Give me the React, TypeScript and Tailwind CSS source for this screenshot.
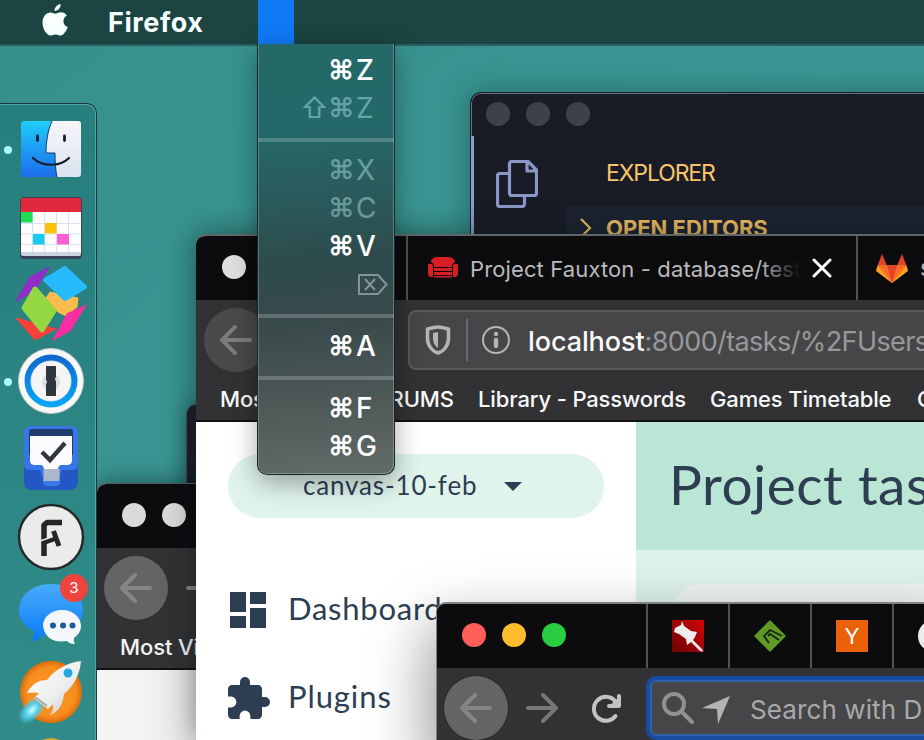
import React from 'react';

function BackArrow({ className }: { className: string }) {
  return (
    <svg width="32" height="32" viewBox="0 0 32 32" fill="none" stroke="currentColor" strokeWidth="4" strokeLinecap="round" strokeLinejoin="round" className={className}>
      <path d="M15 3 2 16l13 13M2 16h28" />
    </svg>
  );
}

function AppleLogo() {
  return (
    <svg width="26" height="32" viewBox="0 0 26 32" fill="#f8ffff" className="shrink-0">
      <path d="M18.6 0c.4 3.300-2.600 7-6 7C12.200 3.900 15.300.500 18.600 0Z" />
      <path d="M13.300 9.700c1.300 0 3.100-1.500 5.700-1.500 2.200 0 4.500 1.200 5.800 3.200-5 2.800-4.200 9.900 1 11.700-1.200 3.500-4.300 8.500-7.300 8.500-1.800 0-2.700-1.100-5-1.100s-3.300 1.100-5 1.100C4.700 31.600.500 25 .500 18.600c0-6.400 3.900-10.200 8-10.200 2.200 0 3.700 1.300 4.800 1.300Z" />
    </svg>
  );
}

function MenuBar() {
  return (
    <header className="absolute inset-x-0 top-0 flex h-[46px] items-start border-b-2 border-[#2a5f5d] bg-[#1b4442] pl-[42px] text-[#f8ffff]">
      <div className="flex h-[44px] items-start pt-1">
        <AppleLogo />
      </div>
      <div className="ml-10 h-[44px] w-[150px] pt-px text-[27px] font-bold leading-[44px] tracking-[0.6px]">Firefox</div>
      <div className="h-[44px] w-9 bg-[#1079f5]" />
    </header>
  );
}

function Finder() {
  return (
    <svg width="62" height="58" viewBox="0 0 62 58">
      <defs>
        <linearGradient id="fb" x1="0" y1="0" x2="0" y2="1"><stop stopColor="#1fcdfb" /><stop offset="1" stopColor="#1c6cee" /></linearGradient>
        <linearGradient id="fw" x1="0" y1="0" x2="0" y2="1"><stop stopColor="#f6f6fa" /><stop offset="1" stopColor="#dbe3ef" /></linearGradient>
      </defs>
      <rect x="1" y="1" width="60" height="56" rx="3" fill="url(#fb)" />
      <path d="M32 1h26a3 3 0 0 1 3 3v50a3 3 0 0 1-3 3H37c-1.500-7-2-15-2-24h-9C26 21 28 10 32 1Z" fill="url(#fw)" />
      <path d="M32 1c-4 9-6 20-6 32h9c0 9 .5 17 2 24" fill="none" stroke="#173a63" strokeWidth="1" />
      <path d="M17.500 16v4.500M44.500 16v4.500" stroke="#16202c" strokeWidth="2.800" strokeLinecap="round" />
      <path d="M13 38c9 9 27 9 36 0" fill="none" stroke="#16202c" strokeWidth="2.200" strokeLinecap="round" />
    </svg>
  );
}

function CalendarIcon() {
  return (
    <svg width="62" height="62" viewBox="0 0 62 62">
      <rect x="0" y="0" width="62" height="62" rx="4" fill="#3b4257" />
      <rect x="1" y="3" width="60" height="56" rx="2" fill="#ccd4e4" />
      <path d="M1 14h60v41H1z" fill="#fdfdff" />
      <path d="M1 3q0-2 2-2h56q2 0 2 2v12H1z" fill="#e1283c" />
      <path d="M12.500 15v40M24.500 15v40M36.500 15v40M48.500 15v40M1 26.500h60M1 37h60M1 47.500h60" stroke="#d7e2ee" strokeWidth="1" />
      <path d="M1 15h11.500v10.500H1z" fill="#1ddb53" />
      <path d="M25 26h11.500v10.500H25z" fill="#fdc30a" />
      <path d="M13 37h11.500v10.500H13z" fill="#17cbee" />
      <path d="M37 37h12v10.500H37z" fill="#f95fd1" />
    </svg>
  );
}

function CubesIcon() {
  return (
    <svg width="74" height="76" viewBox="0 0 74 76" strokeLinejoin="round" strokeWidth="1">
      <path d="M35 2 16 12 2 36l19-10z" fill="#902ec7" stroke="#902ec7" />
      <path d="M36 27 64 33 63 42 52 51 44 47 32 33z" fill="#fbbc4e" stroke="#fbbc4e" />
      <path d="M51 3 71 22 51 34 31 15z" fill="#27bafc" stroke="#27bafc" strokeWidth="4" />
      <path d="M2 53 42 64 21 75z" fill="#f9403a" stroke="#f9403a" />
      <path d="M21 24 40 46 28 65 10 43z" fill="#93d843" stroke="#93d843" strokeWidth="5" />
      <path d="M72 40 56 66 39 75 53 49z" fill="#f82ea2" stroke="#f82ea2" />
    </svg>
  );
}

function OnePassword() {
  return (
    <svg width="66" height="66" viewBox="0 0 66 66">
      <defs><linearGradient id="op" x1="0" y1="0" x2="0" y2="1"><stop stopColor="#0f66cd" /><stop offset="1" stopColor="#06a9fa" /></linearGradient></defs>
      <circle cx="33" cy="33" r="32.500" fill="#f8f8f8" stroke="#bfc8c8" />
      <circle cx="33" cy="33" r="26.500" fill="url(#op)" />
      <circle cx="33" cy="33" r="20" fill="#f5f5f6" stroke="#e0edf6" />
      <circle cx="33" cy="34" r="9" fill="#dcdde0" />
      <path d="M28 18h10v11q-2 2 0 4v15H28V36q2-2 0-4z" fill="#30363b" />
    </svg>
  );
}

function ThingsIcon() {
  return (
    <svg width="54" height="66" viewBox="0 0 54 66">
      <rect x="0" y="2" width="54" height="63" rx="8" fill="#2358c4" />
      <path d="M0 8q0-7 7-7h40q7 0 7 7v31q0 6-6 6H38l-2 6H18l-2-6H6q-6 0-6-6z" fill="#3875e6" />
      <path d="M5 7q0-3 3-3h38q3 0 3 3v33H5z" fill="#1d3e6a" />
      <path d="M6 11h42v25q0 4-4 4h-7q-2 0-3 4H20q-1-4-3-4h-7q-4 0-4-4z" fill="#fcfcfe" />
      <path d="M5 30v6q0 5 5 5h6q2 0 3 4h16q1-4 3-4h6q5 0 5-5v-6" fill="none" stroke="#3875e6" strokeWidth="2" />
      <path d="M19 47h17v10q0 4-4 4h-9q-4 0-4-4z" fill="#3b77e7" />
      <path d="M19.500 44h16v12h-16z" fill="#acb7ca" />
      <path d="m18 27 8 8 15-17" fill="none" stroke="#30363e" strokeWidth="4.300" />
    </svg>
  );
}

function ForkLiftIcon() {
  return (
    <svg width="68" height="68" viewBox="0 0 68 68">
      <circle cx="34" cy="34" r="32" fill="#ebebeb" stroke="#252a2b" strokeWidth="2.500" />
      <path d="M27 53V22l3-2.500h15" fill="none" stroke="#252629" strokeWidth="5.500" strokeLinejoin="round" />
      <path d="m22 38.500 14-4.500" stroke="#ebebeb" strokeWidth="2" />
      <path d="m25 40.500 14-5" stroke="#252629" strokeWidth="4.500" />
      <path d="m36.500 28 5.500 15" stroke="#252629" strokeWidth="5" />
    </svg>
  );
}

function MessagesIcon() {
  return (
    <div className="relative size-[64px]">
      <svg width="66" height="64" viewBox="0 0 66 64">
        <defs><linearGradient id="ms" x1="0" y1="0" x2="0" y2="1"><stop stopColor="#49acf8" /><stop offset="1" stopColor="#087afb" /></linearGradient></defs>
        <path d="M32 2c18 0 32 11 32 26S50 54 32 54q-4 0-8-1-5 6-12 6 4-4 3-10C5 44 0 37 0 28 0 13 14 2 32 2Z" fill="url(#ms)" />
        <path d="M43 28c11 0 19 7 19 16 0 5-3 9-7 12q-1 3 1 6-6 0-8-3-21 3-24-15c0-9 8-16 19-16Z" fill="#f4f7fa" />
        <path d="M34 43.500h.01M44 43.500h.01M53.500 43.500h.01" stroke="#195d9e" strokeWidth="6" strokeLinecap="round" />
      </svg>
      <span className="absolute -top-[8px] left-[41px] flex size-7 items-center justify-center rounded-full bg-[#ee4440] text-[15px] text-white">3</span>
    </div>
  );
}

function RocketIcon() {
  return (
    <svg width="64" height="66" viewBox="0 0 64 66">
      <defs>
        <radialGradient id="mo"><stop stopColor="#fb9c22" /><stop offset=".8" stopColor="#f78d1e" /><stop offset="1" stopColor="#dc6b0c" /></radialGradient>
        <linearGradient id="rk" x1="0" y1="0" x2="1" y2="1"><stop stopColor="#ffffff" /><stop offset=".6" stopColor="#ebeced" /><stop offset="1" stopColor="#b8babd" /></linearGradient>
        <radialGradient id="fl"><stop stopColor="#c9ffff" /><stop offset=".5" stopColor="#53cbec" /><stop offset="1" stopColor="#53cbec" stopOpacity="0" /></radialGradient>
      </defs>
      <circle cx="32" cy="34" r="31" fill="url(#mo)" />
      <ellipse cx="13" cy="52" rx="17" ry="10" transform="rotate(-45 13 52)" fill="url(#fl)" />
      <path d="M62 3C46 5 35 13 28 22q-13 0-20 13 8-1 12 0l-5 5 14 11 5-5q1 6-3 11 12-4 14-21C56 27 61 15 62 3Z" fill="url(#rk)" />
      <path d="m16 39 12 9" stroke="#a8acad" strokeWidth="2" />
      <circle cx="49" cy="15" r="4.500" fill="#25a8de" />
    </svg>
  );
}

function DockItem({ top, height, running, children }: { top: string; height: string; running?: boolean; children: React.ReactNode }) {
  return (
    <div className={`relative flex w-full shrink-0 justify-center pl-[6px] ${top} ${height}`}>
      {running && <span className="absolute left-1 top-1/2 mt-px size-2 -translate-y-1/2 rounded-full bg-[#a8fbf8]" />}
      <div className="shrink-0">{children}</div>
    </div>
  );
}

function Dock() {
  return (
    <nav className="absolute left-0 top-[103px] flex h-[637px] w-[97px] flex-col overflow-hidden rounded-tr-[10px] border-r border-t border-[#17393b] bg-linear-to-b from-[#267e7d] to-[#318c89] shadow-[inset_-1px_1px_0_#56a5a2]">
      <DockItem top="mt-4" height="h-[58px]" running><Finder /></DockItem>
      <DockItem top="mt-[19px]" height="h-[62px]"><CalendarIcon /></DockItem>
      <DockItem top="mt-[6px]" height="h-[76px]"><CubesIcon /></DockItem>
      <DockItem top="mt-[7px]" height="h-[66px]" running><OnePassword /></DockItem>
      <DockItem top="mt-[11px]" height="h-[66px]"><ThingsIcon /></DockItem>
      <DockItem top="mt-[12px]" height="h-[68px]"><ForkLiftIcon /></DockItem>
      <DockItem top="mt-[11px]" height="h-[64px]"><MessagesIcon /></DockItem>
      <DockItem top="mt-[12px]" height="h-[66px]"><RocketIcon /></DockItem>
      <DockItem top="mt-[14px]" height="h-[40px]"><div className="size-[40px] rounded-full bg-[#d5a81d]" /></DockItem>
    </nav>
  );
}

function EditorWindow() {
  return (
    <section className="absolute left-[470px] top-[92px] h-[300px] w-[480px] overflow-hidden rounded-tl-[11px] border border-[#0c2627] bg-[#191c27] shadow-[0_0_28px_rgba(0,30,30,0.35)]">
      <div className="flex h-[43px] gap-4 rounded-tl-[10px] border-l border-t border-[#6b7078] pl-[14px] pt-[8px]">
        <i className="size-6 rounded-full bg-[#3e414b]" />
        <i className="size-6 rounded-full bg-[#3e414b]" />
        <i className="size-6 rounded-full bg-[#3e414b]" />
      </div>
      <div className="flex">
        <div className="flex h-[200px] w-[95px] shrink-0 border-l-[3px] border-[#8f9bc8] pl-[22px] pt-6">
          <svg width="42" height="48" viewBox="0 0 42 48" fill="none" stroke="#8897c4" strokeWidth="3.200" strokeLinejoin="round">
            <path d="M13 13.500H4a2.500 2.500 0 0 0-2.500 2.500v28A2.500 2.500 0 0 0 4 46.500h22a2.500 2.500 0 0 0 2.500-2.500v-8" />
            <path d="M16 1.500h16L40.500 10v23a2.500 2.500 0 0 1-2.500 2.500H16a2.500 2.500 0 0 1-2.500-2.500V4A2.500 2.500 0 0 1 16 1.500ZM31 2v9h9" />
          </svg>
        </div>
        <div className="flex-1">
          <div className="h-[70px] pl-10 text-[23px] leading-[74px] tracking-[-1.1px] text-[#f9c468]">EXPLORER</div>
          <div className="flex h-[44px] items-center bg-[#1d2331] text-[#f0bd60]">
            <svg width="14" height="20" viewBox="0 0 14 20" fill="none" stroke="currentColor" strokeWidth="2.200" className="ml-[13px]"><path d="m2 1 9 9-9 9" /></svg>
            <span className="ml-[13px] text-[22px] font-bold">OPEN EDITORS</span>
          </div>
        </div>
      </div>
    </section>
  );
}

function RearWindow() {
  return (
    <section className="absolute left-[96px] top-[483px] h-[257px] w-[400px] overflow-hidden rounded-tl-[10px] border-l border-t border-[#55595a] bg-white shadow-[0_0_24px_rgba(0,20,20,0.5)]">
      <div className="flex h-[64px] gap-4 bg-[#0c0c0f] pl-[25px] pt-[19px]">
        <i className="size-6 rounded-full bg-[#dadada]" />
        <i className="size-6 rounded-full bg-[#dadada]" />
      </div>
      <div className="h-[122px] border-b-2 border-[#111113] bg-[#323234] pl-[7px] pt-2">
        <div className="flex items-center">
          <div className="flex size-16 items-center justify-center rounded-full bg-[#646465]"><BackArrow className="text-[#858586]" /></div>
          <i className="ml-[18px] h-1 w-7 rounded-full bg-[#858586]" />
        </div>
        <div className="ml-4 mt-[7px] text-[22px] font-medium leading-10 tracking-[-0.1px] text-[#f3f3f4]">Most Visited</div>
      </div>
      <div className="h-[80px] w-[100px] bg-linear-to-r from-[#f4f4f4] from-40% to-[#e4e4e4]" />
    </section>
  );
}

function Sofa() {
  return (
    <svg width="30" height="22" viewBox="0 0 30 22" fill="#d71e22">
      <path d="M6 1q1-1 3-1h12q2 0 3 1 3 1 3 4-3 1-3 5H6q0-4-3-5Q3 2 6 1ZM6 11h18v3H6zM6 15h18v3H6zM6 19h18v1.500H6z" />
      <path d="M0 8q1-2 4-1 1 1 1 3v10H2q-2-1-2-4zM30 8q-1-2-4-1-1 1-1 3v10h3q2-1 2-4z" />
    </svg>
  );
}

function GitLab() {
  return (
    <svg width="32" height="29" viewBox="0 0 32 29">
      <path d="M6 0 1.500 11.500H11zM26 0l4.500 11.500H21z" fill="#e24329" />
      <path d="M1.500 11.500 0 17l16 12 16-12-1.500-5.500z" fill="#fca326" />
      <path d="m1.500 11.500 14.500 17.500 14.500-17.500z" fill="#fc6d26" />
      <path d="m11 11.500 5 17.500 5-17.500z" fill="#e24329" />
    </svg>
  );
}

function PageContent() {
  return (
    <div className="flex h-[320px] bg-white text-[#2d3e52]" style={{ fontFamily: 'Lato, sans-serif' }}>
      <aside className="w-[440px] shrink-0 pl-8 pt-8">
        <div className="flex h-16 w-[376px] items-center rounded-full bg-[#e0f4ec] pl-[75px] text-[26px] leading-none tracking-[0.85px]">
          <span className="-mt-[2px] w-[201px]">canvas-10-feb</span>
          <i className="border-x-[9px] border-t-[9px] border-x-transparent border-t-[#2d3e52]" />
        </div>
        <div className="mt-[60px] flex h-16 items-center text-[31px]">
          <svg width="38" height="36" viewBox="0 0 38 36" fill="currentColor" className="ml-[2px]"><path d="M0 0h16v20H0zM20 0h16v12H20zM0 24h16v12H0zM20 16h16v20H20z" /></svg>
          <span className="-mt-[4px] ml-5 tracking-[0.75px]">Dashboard</span>
        </div>
        <div className="mt-6 flex h-16 items-center text-[31px]">
          <svg width="42" height="42" viewBox="2 1 21 21" fill="currentColor"><path d="M20.500 11H19V7c0-1.100-.900-2-2-2h-4V3.500a2.500 2.500 0 0 0-5 0V5H4c-1.100 0-2 .900-2 2v3.800h1.500a2.700 2.700 0 0 1 0 5.400H2V20c0 1.100.900 2 2 2h3.800v-1.500a2.700 2.700 0 0 1 5.400 0V22H17c1.100 0 2-.900 2-2v-4h1.500a2.500 2.500 0 0 0 0-5z" /></svg>
          <span className="-mt-[4px] ml-[18px] tracking-[0.9px]">Plugins</span>
        </div>
      </aside>
      <main className="flex-1 bg-[#def2ea]">
        <div className="h-[128px] whitespace-nowrap bg-[#bbe6d5] pl-[33px] text-[55px] leading-[125px] tracking-[0.5px]">Project tasks</div>
        <div className="ml-[37px] mt-[34px] h-40 rounded-tl-[28px] bg-[#eef3f1]" />
      </main>
    </div>
  );
}

function MainWindow() {
  return (
    <section className="absolute left-[196px] top-[234px] h-[506px] w-[760px] overflow-hidden rounded-tl-[10px] border-t-2 border-[#606669] bg-white shadow-[0_0_30px_rgba(0,20,20,0.5)]">
      <div className="flex h-[64px] items-center bg-[#0c0c0e]">
        <i className="-mt-[2px] ml-[26px] size-6 rounded-full bg-[#dedede]" />
        <div className="ml-[160px] flex h-full w-[452px] items-center border-x-2 border-[#515154] pl-5">
          <Sofa />
          <div className="relative ml-3 mt-[2px] w-[330px] shrink-0 overflow-hidden whitespace-nowrap text-[22px] tracking-[0.12px] text-[#bababc]">
            Project Fauxton - database/tests
            <i className="absolute inset-y-0 right-0 w-10 bg-linear-to-r from-transparent to-[#0c0c0e]" />
          </div>
          <svg width="20" height="20" viewBox="0 0 20 20" stroke="#fff" strokeWidth="3" strokeLinecap="round" className="ml-[12px] shrink-0"><path d="m2 2 16 16M18 2 2 18" /></svg>
        </div>
        <div className="ml-[18px]"><GitLab /></div>
        <span className="ml-3 text-[23px] text-[#bababc]">s</span>
      </div>
      <div className="h-[122px] border-b-2 border-[#111113] bg-[#323234]">
        <div className="flex pl-2 pt-2">
          <div className="flex size-16 shrink-0 items-center justify-center rounded-full bg-[#4a4a4c]"><BackArrow className="text-[#7d7d7f]" /></div>
          <div className="ml-[140px] mt-[2px] flex h-[60px] w-[560px] shrink-0 items-center rounded-lg border-2 border-[#59595b] bg-[#464648] pl-[15px] text-[#b4b4b6]">
            <svg width="26" height="30" viewBox="0 0 26 30"><path d="M13 2c4 0 7 1 10.500 2v9c0 7-4 13-10.500 15C6.500 26 2.500 20 2.500 13V4C6 3 9 2 13 2Z" fill="none" stroke="currentColor" strokeWidth="3.500" strokeLinejoin="round" /><path d="M13 7v16c-3-2-5-5-5-10V8z" fill="currentColor" /></svg>
            <i className="ml-[15px] h-[42px] w-0.5 bg-[#6a6a74]" />
            <svg width="28" height="28" viewBox="0 0 28 28" className="ml-[14px]"><circle cx="14" cy="14" r="13" fill="none" stroke="currentColor" strokeWidth="2" /><circle cx="14" cy="8" r="2.200" fill="currentColor" /><path d="M14 14v6" stroke="currentColor" strokeWidth="4.400" strokeLinecap="round" /></svg>
            <div className="ml-[18px] mt-[4px] whitespace-nowrap text-[27px] tracking-[-0.1px] text-[#98989a]"><span className="font-medium text-[#f9f9fa]">localhost</span><span className="tracking-[-0.6px]">:8000/tasks/%2FUsers</span></div>
          </div>
        </div>
        <div className="flex whitespace-nowrap pl-6 text-[22px] font-medium leading-[54px] tracking-[-0.15px] text-[#f9f9fa]">
          <span className="w-[140px] shrink-0">Most Visited</span>
          <span className="w-[118px] shrink-0">FORUMS</span>
          <span className="w-[232px] shrink-0">Library - Passwords</span>
          <span className="w-[207px] shrink-0">Games Timetable</span>
          <span>Canvas</span>
        </div>
      </div>
      <PageContent />
    </section>
  );
}

function PinFavicon() {
  return (
    <svg width="32" height="32" viewBox="0 0 32 32">
      <defs><linearGradient id="pf" x1="1" y1="0" x2="0" y2="1"><stop stopColor="#d10508" /><stop offset="1" stopColor="#6d0305" /></linearGradient></defs>
      <path d="M0 0h32v32H0z" fill="url(#pf)" />
      <path d="m10 1 2 5 7 5 6 1-2 5-2 3 9 9 1 3-3-1-9-9-4 3-1-6-7-5-5-2 1-4 6-3z" fill="#ededed" />
    </svg>
  );
}

function FrontTab({ children }: { children: React.ReactNode }) {
  return <div className="flex h-full w-[82px] shrink-0 items-center justify-center border-l-2 border-[#515154]">{children}</div>;
}

function FrontWindow() {
  return (
    <section className="absolute left-[436px] top-[602px] h-[138px] w-[500px] overflow-hidden rounded-tl-[10px] border-l border-t-2 border-[#808384] bg-[#323234] shadow-[0_30px_60px_8px_rgba(0,0,0,0.4)]">
      <div className="flex h-[64px] items-center bg-[#0c0c0e]">
        <div className="-mt-[2px] flex w-[209px] shrink-0 gap-4 pl-[25px]">
          <i className="size-6 rounded-full bg-[#ff5f57]" />
          <i className="size-6 rounded-full bg-[#febd2e]" />
          <i className="size-6 rounded-full bg-[#28cd41]" />
        </div>
        <FrontTab><PinFavicon /></FrontTab>
        <FrontTab>
          <svg width="32" height="32" viewBox="0 0 32 32"><path d="M16 0 32 16 16 32 0 16z" fill="#609926" /><path d="m28 16-12-6-6 6 5 7M14 16l2-2 9 6" fill="none" stroke="#18240d" strokeWidth="1.800" /></svg>
        </FrontTab>
        <FrontTab><div className="flex size-8 items-center justify-center bg-[#eb6109] text-[22px] leading-none text-white">Y</div></FrontTab>
        <FrontTab>
          <svg width="32" height="32" viewBox="0 0 32 32"><circle cx="16" cy="16" r="13" fill="none" stroke="#ececec" strokeWidth="6" /></svg>
        </FrontTab>
      </div>
      <div className="flex pl-[7px] pt-2">
        <div className="flex size-16 shrink-0 items-center justify-center rounded-full bg-[#646465] shadow-[0_0_0_1px_#28282a]"><BackArrow className="text-[#858586]" /></div>
        <div className="ml-[18px] mt-4"><BackArrow className="rotate-180 text-[#77777a]" /></div>
        <svg width="32" height="32" viewBox="0 0 32 32" fill="none" stroke="#c3c3c5" strokeWidth="4" strokeLinecap="round" strokeLinejoin="round" className="ml-[32px] mt-4 shrink-0"><path d="M25.500 24A12 12 0 1 1 25 9" /><path d="M29 4v10H19" /><path d="M29 6v8h-9z" fill="#c3c3c5" strokeWidth="1" /></svg>
        <div className="ml-[24px] flex h-16 w-[320px] shrink-0 items-center rounded-[10px] border-4 border-[#184ca0] bg-[#464648] pl-3 shadow-[inset_0_0_0_2px_#3060a8]">
          <svg width="32" height="32" viewBox="0 0 32 32" fill="none" stroke="#919193" strokeWidth="4" strokeLinecap="round" className="shrink-0"><circle cx="12" cy="12" r="10" /><path d="m20 20 10 10" /></svg>
          <svg width="28" height="28" viewBox="0 0 28 28" fill="#b4b4b6" className="ml-2 mt-1 shrink-0"><path d="M28 0 16 28l-1-15L0 12z" /></svg>
          <span className="ml-5 mt-[3px] whitespace-nowrap text-[26px] tracking-[0.1px] text-[#a9a9ab]">Search with DuckDuckGo</span>
        </div>
      </div>
    </section>
  );
}

function Shortcut({ keys, dim, shift }: { keys: string; dim?: boolean; shift?: boolean }) {
  return (
    <div className={`flex h-[38px] items-center pb-px pl-[70px] text-[28px] leading-none ${dim ? 'text-[#c8ffff]/40' : 'font-medium text-white'}`}>
      {shift && <span className="-ml-[28px] w-7">⇧</span>}
      <span className={dim ? 'w-7 text-[27px] font-medium' : 'w-7 text-[27px] font-bold'}>⌘</span>
      <span>{keys}</span>
    </div>
  );
}

function Separator() {
  return <div className="mb-[9px] mt-[11px] h-1 bg-white/20" />;
}

function EditMenu() {
  return (
    <div className="absolute left-[257px] top-[44px] h-[431px] w-[138px] rounded-b-[10px] border border-t-0 border-[#15292b] bg-[linear-gradient(175deg,#246967_0%,#24686a_20%,#2b5a5b_36%,#2d4b4c_50%,#3a4a4a_65%,#4d5857_82%,#626b6a_100%)] pt-[7px] shadow-[inset_-1px_-1px_0_rgba(255,255,255,0.25),inset_1px_0_0_rgba(255,255,255,0.2),0_8px_26px_rgba(0,0,0,0.35)]">
      <Shortcut keys="Z" />
      <Shortcut keys="Z" dim shift />
      <Separator />
      <Shortcut keys="X" dim />
      <Shortcut keys="C" dim />
      <Shortcut keys="V" />
      <div className="flex h-[38px] items-center pl-[100px]">
        <svg width="30" height="21" viewBox="0 0 30 21" fill="none" stroke="#829597" strokeWidth="2"><path d="M1 1h19l8.500 9.500L20 20H1zM7 5l10 11M17 5 7 16" /></svg>
      </div>
      <Separator />
      <Shortcut keys="A" />
      <Separator />
      <Shortcut keys="F" />
      <Shortcut keys="G" />
    </div>
  );
}

export default function App() {
  return (
    <div className="relative h-[740px] w-[924px] overflow-hidden bg-linear-to-br from-[#358f8b] via-[#3b9693] to-[#358a88]" style={{ fontFamily: 'Inter, sans-serif' }}>
      <EditorWindow />
      <section className="absolute left-[186px] top-[404px] h-[120px] w-[100px] rounded-tl-[10px] border border-[#4b5058] bg-[#1d1f2a] shadow-[0_0_20px_rgba(0,20,20,0.4)]" />
      <RearWindow />
      <MainWindow />
      <FrontWindow />
      <Dock />
      <MenuBar />
      <EditMenu />
    </div>
  );
}
